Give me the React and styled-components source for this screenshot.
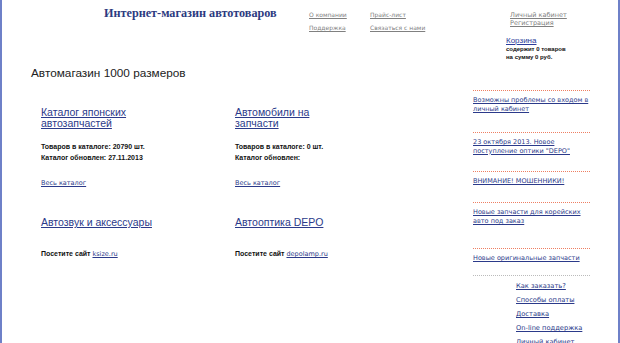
import styled, { createGlobalStyle } from 'styled-components';

const GlobalStyle = createGlobalStyle`
  html, body {
    margin: 0;
    padding: 0;
    background: #ffffff;
  }
  * {
    box-sizing: border-box;
  }
`;

const topNav = [
  ['О компании', 'Прайс-лист'],
  ['Поддержка', 'Связаться с нами'],
];

const catalogs = [
  {
    title: 'Каталог японских автозапчастей',
    lines: ['Товаров в каталоге: 20790 шт.', 'Каталог обновлен: 27.11.2013'],
    more: 'Весь каталог',
  },
  {
    title: 'Автомобили на запчасти',
    lines: ['Товаров в каталоге: 0 шт.', 'Каталог обновлен:'],
    more: 'Весь каталог',
  },
  {
    title: 'Автозвук и аксессуары',
    site: 'ksize.ru',
  },
  {
    title: 'Автооптика DEPO',
    site: 'depolamp.ru',
  },
];

const news = [
  'Возможны проблемы со входом в личный кабинет',
  '23 октября 2013. Новое поступление оптики "DEPO"',
  'ВНИМАНИЕ! МОШЕННИКИ!',
  'Новые запчасти для корейских авто под заказ',
  'Новые оригинальные запчасти',
];

// distance between the dotted separators in the news column
const newsHeights = [42, 39, 31, 46, 27];

const menu = ['Как заказать?', 'Способы оплаты', 'Доставка', 'On-line поддержка', 'Личный кабинет'];

const Page = styled.div`
  width: 620px;
  min-height: 343px;
  border-left: 2px solid #6e80c8;
  border-right: 2px solid #6e80c8;
  font-family: 'DejaVu Sans', Verdana, sans-serif;
  color: #111;
`;

const Header = styled.header`
  display: grid;
  grid-template-columns: 305px 198px 1fr;
  height: 65px;
`;

const SiteTitle = styled.div`
  padding: 6px 0 0 102px;
  font-family: 'Liberation Serif', 'Times New Roman', serif;
  font-weight: bold;
  font-size: 12.2px;
  color: #2c3a80;
  white-space: nowrap;
`;

const TopNav = styled.nav`
  display: grid;
  grid-template-columns: 61px 1fr;
  row-gap: 5px;
  align-content: start;
  padding: 11px 0 0 2px;
`;

const GrayLink = styled.a`
  font-size: ${({ $small }) => ($small ? '6px' : '6.5px')};
  line-height: 8px;
  color: #808080;
  text-decoration: underline;
  white-space: nowrap;
`;

const Account = styled.div`
  display: flex;
  flex-direction: column;
  padding: 11px 0 0 5px;
`;

const Cart = styled.div`
  display: flex;
  flex-direction: column;
  margin: 9px 0 0 -4px;
  font-family: 'Liberation Sans', Arial, sans-serif;
`;

const CartLink = styled.a`
  font-size: 8px;
  line-height: 9px;
  color: #2b3b9a;
  text-decoration: underline;
`;

const CartText = styled.span`
  font-size: 6px;
  line-height: 8px;
  font-weight: bold;
`;

const Body = styled.div`
  display: flex;
`;

const Main = styled.main`
  width: 468px;
  padding-left: 29px;
`;

const PageTitle = styled.h1`
  margin: 0;
  font-family: 'Liberation Sans', Arial, sans-serif;
  font-weight: normal;
  font-size: 11.8px;
  line-height: 16px;
  color: #222;
`;

const Cards = styled.div`
  display: grid;
  grid-template-columns: 194px 194px;
  padding: 26px 0 0 10px;
  row-gap: 18px;
`;

const Card = styled.div`
  display: flex;
  flex-direction: column;
  min-height: ${({ $tall }) => ($tall ? '92px' : '0')};
`;

const CardTitle = styled.a`
  font-family: 'Liberation Sans', Arial, sans-serif;
  font-size: 10.5px;
  line-height: 11px;
  color: #2b3a8a;
  text-decoration: underline;
  width: 116px;
  margin-bottom: 12px;
`;

const Info = styled.span`
  font-family: 'Liberation Sans', Arial, sans-serif;
  font-size: 7px;
  line-height: 11px;
  font-weight: bold;
  color: #111;
`;

const MoreLink = styled.a`
  margin-top: 16px;
  font-size: 6.5px;
  line-height: 8px;
  color: #2b3a8a;
  text-decoration: underline;
`;

const Visit = styled.span`
  margin-top: 10px;
  font-family: 'Liberation Sans', Arial, sans-serif;
  font-size: 7px;
  font-weight: bold;
  color: #111;

  a {
    font-family: 'DejaVu Sans', Verdana, sans-serif;
    font-size: 6.5px;
    font-weight: normal;
    color: #2b3a8a;
    text-decoration: underline;
  }
`;

const Sidebar = styled.aside`
  width: 117px;
  margin-left: 3px;
  padding-top: 25px;
`;

const NewsItem = styled.div`
  border-top: 1px dotted #ee7f62;
  padding-top: 5px;
  height: ${({ $h }) => $h}px;
`;

const NewsLink = styled.a`
  display: block;
  font-size: 6.5px;
  line-height: 8.5px;
  color: #2b3a8a;
  text-decoration: underline;
`;

const Menu = styled.ul`
  list-style: none;
  margin: 0;
  padding: 6px 0 0 43px;
  border-top: 1px dotted #bbb;
  display: flex;
  flex-direction: column;
  gap: 6px;
`;

const MenuItem = styled.li`
  font-size: 6.7px;
  line-height: 8px;
`;

const MenuLink = styled.a`
  color: #2b3a8a;
  text-decoration: underline;
`;

const App = () => (
  <>
    <GlobalStyle />
    <Page>
      <Header>
        <SiteTitle>Интернет-магазин автотоваров</SiteTitle>
        <TopNav>
          {topNav.flat().map(item => (
            <GrayLink key={item} $small>
              {item}
            </GrayLink>
          ))}
        </TopNav>
        <Account>
          <GrayLink>Личный кабинет</GrayLink>
          <GrayLink>Регистрация</GrayLink>
          <Cart>
            <CartLink>Корзина</CartLink>
            <CartText>содержит 0 товаров</CartText>
            <CartText>на сумму 0 руб.</CartText>
          </Cart>
        </Account>
      </Header>
      <Body>
        <Main>
          <PageTitle>Автомагазин 1000 размеров</PageTitle>
          <Cards>
            {catalogs.map(c => (
              <Card key={c.title} $tall={!!c.lines}>
                <CardTitle>{c.title}</CardTitle>
                {c.lines && c.lines.map(l => <Info key={l}>{l}</Info>)}
                {c.more && <MoreLink>{c.more}</MoreLink>}
                {c.site && (
                  <Visit>
                    Посетите сайт <a>{c.site}</a>
                  </Visit>
                )}
              </Card>
            ))}
          </Cards>
        </Main>
        <Sidebar>
          {news.map((n, i) => (
            <NewsItem key={n} $h={newsHeights[i]}>
              <NewsLink>{n}</NewsLink>
            </NewsItem>
          ))}
          <Menu>
            {menu.map(m => (
              <MenuItem key={m}>
                <MenuLink>{m}</MenuLink>
              </MenuItem>
            ))}
          </Menu>
        </Sidebar>
      </Body>
    </Page>
  </>
);

export default App;
